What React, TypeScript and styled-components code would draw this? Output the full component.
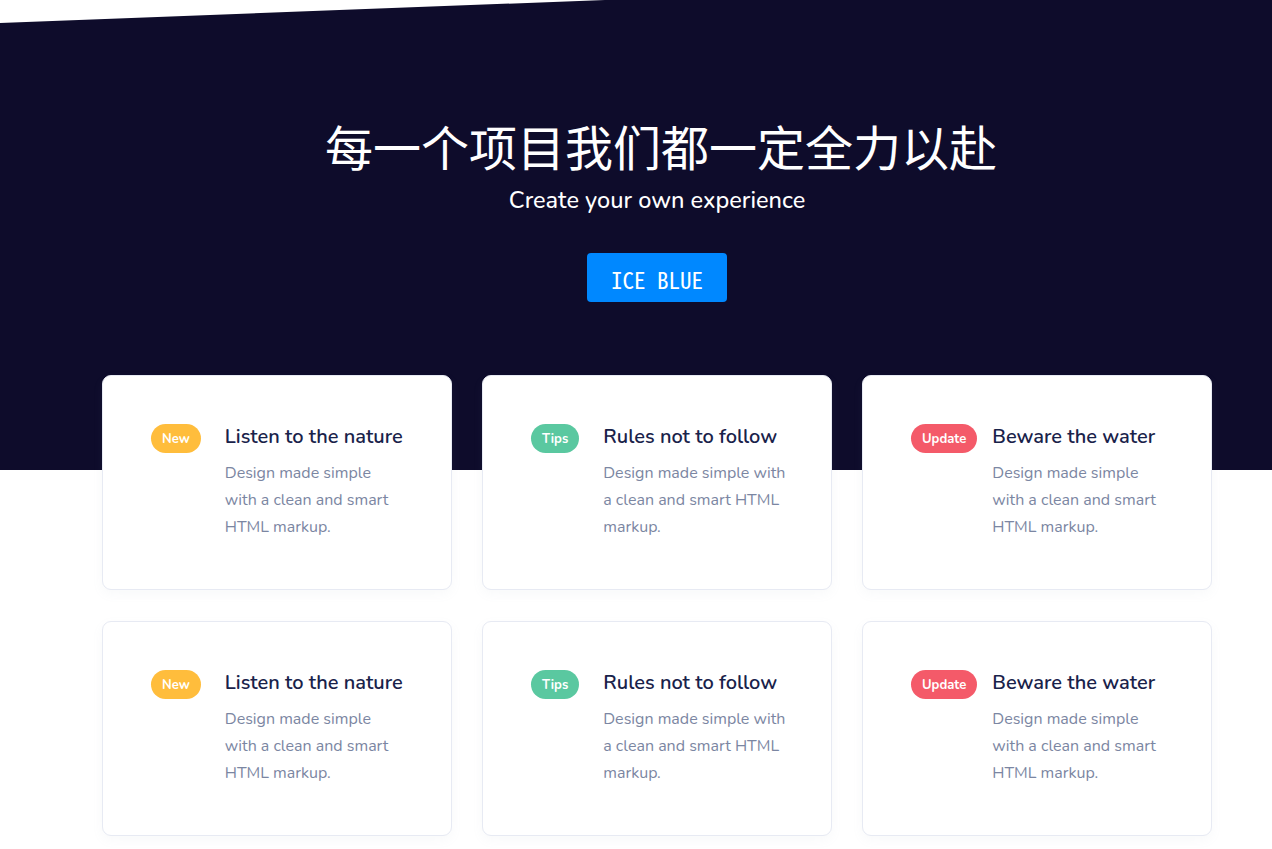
import React from "react";
import styled, { createGlobalStyle } from "styled-components";

const Global = createGlobalStyle`
  html, body { margin: 0; padding: 0; background: #ffffff; overflow-x: hidden; }
  body { font-family: "Nunito", "Lato", "Noto Sans", sans-serif; }
  * { box-sizing: border-box; }
`;

const Page = styled.div`
  width: 1314px;
  min-height: 849px;
  background: #ffffff;
`;

const Hero = styled.section`
  background: #0e0c2b;
  clip-path: polygon(605px 0, 100% 0, 100% 100%, 0 100%, 0 23px);
  padding: 116px 0 168px;
  display: flex;
  flex-direction: column;
  align-items: center;
`;

const Title = styled.h1`
  margin: 0 0 0 8px;
  font-family: "Noto Sans CJK SC", "Noto Sans", sans-serif;
  font-weight: 400;
  font-size: 48px;
  line-height: 58px;
  color: #ffffff;
`;

const Subtitle = styled.p`
  margin: 11px 0 0;
  font-size: 23.5px;
  line-height: 30px;
  font-weight: 500;
  color: #ffffff;
`;

const HeroButton = styled.button`
  margin-top: 38px;
  width: 140px;
  height: 49px;
  border: none;
  border-radius: 4px;
  background: #0088ff;
  color: #ffffff;
  font-family: "Noto Sans Mono CJK SC", "DejaVu Sans Mono", monospace;
  font-size: 23px;
  padding: 2px 0 0;
  display: flex;
  align-items: center;
  justify-content: center;
  cursor: pointer;
`;

const Grid = styled.div`
  position: relative;
  z-index: 1;
  width: 1110px;
  margin: -95px auto 0;
  display: grid;
  grid-template-columns: repeat(3, 350px);
  column-gap: 30px;
  row-gap: 31px;
  padding-bottom: 13px;
`;

const Card = styled.div`
  background: #ffffff;
  border: 1px solid #e7eaf3;
  border-radius: 9px;
  height: 215px;
  padding: 48px 40px 0 48px;
  display: flex;
  align-items: flex-start;
  box-shadow: 0 4px 12px rgba(140, 152, 164, 0.06);
`;

const Badge = styled.span<{ $bg: string; $gap: number }>`
  flex: none;
  margin-right: ${(p) => p.$gap}px;
  height: 29px;
  padding: 0 11px;
  border-radius: 15px;
  background: ${(p) => p.$bg};
  color: #ffffff;
  font-size: 13px;
  font-weight: 700;
  display: inline-flex;
  align-items: center;
  justify-content: center;
`;

const Body = styled.div<{ $w: number }>`
  width: ${(p) => p.$w}px;
`;

const CardTitle = styled.h3`
  margin: 0;
  font-size: 20px;
  line-height: 26px;
  font-weight: 600;
  color: #19224a;
  white-space: nowrap;
`;

const CardText = styled.p`
  margin: 10px 0 0;
  font-size: 16px;
  line-height: 27px;
  color: #7b86a2;
`;

type Item = { label: string; bg: string; gap: number; w: number; title: string };

const items: Item[] = [
  { label: "New", bg: "#ffbd3c", gap: 24, w: 175, title: "Listen to the nature" },
  { label: "Tips", bg: "#5ac8a0", gap: 24, w: 190, title: "Rules not to follow" },
  { label: "Update", bg: "#f45a69", gap: 15, w: 175, title: "Beware the water" },
];

export default function App() {
  const all = [...items, ...items];
  return (
    <Page>
      <Global />
      <Hero>
        <Title>每一个项目我们都一定全力以赴</Title>
        <Subtitle>Create your own experience</Subtitle>
        <HeroButton>ICE BLUE</HeroButton>
      </Hero>
      <Grid>
        {all.map((it, i) => (
          <Card key={i}>
            <Badge $bg={it.bg} $gap={it.gap}>
              {it.label}
            </Badge>
            <Body $w={it.w}>
              <CardTitle>{it.title}</CardTitle>
              <CardText>Design made simple with a clean and smart HTML markup.</CardText>
            </Body>
          </Card>
        ))}
      </Grid>
    </Page>
  );
}
